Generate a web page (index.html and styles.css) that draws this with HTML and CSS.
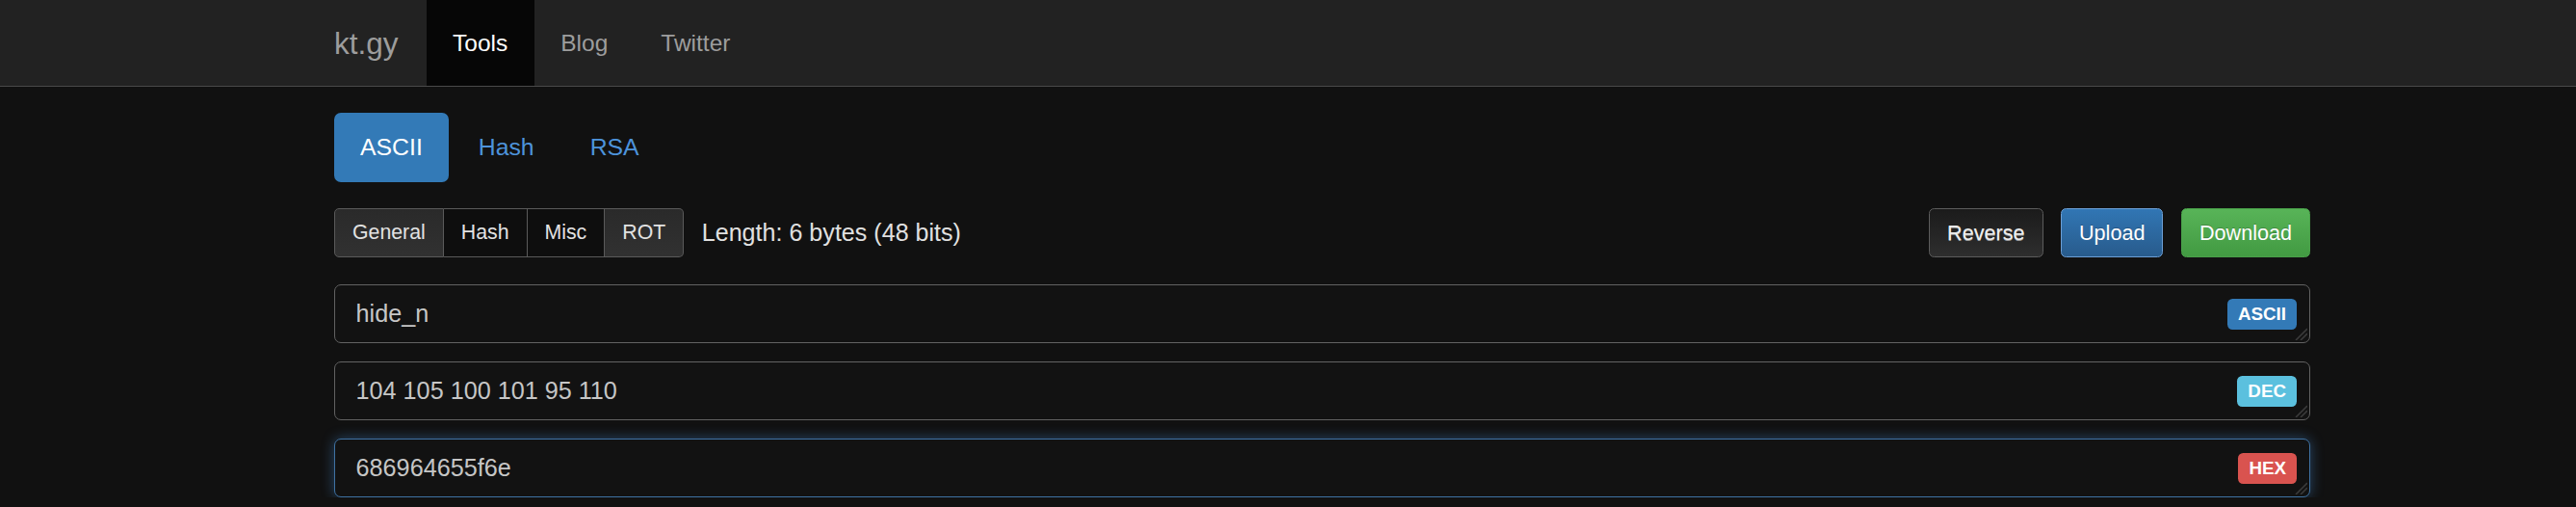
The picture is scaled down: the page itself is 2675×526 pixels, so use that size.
FILE: index.html
```html
<!DOCTYPE html>
<html>
<head>
<meta charset="utf-8">
<title>kt.gy Tools</title>
<link rel="stylesheet" href="styles.css">
</head>
<body>
<nav class="navbar">
  <div class="container nav-inner">
    <a class="brand">kt.gy</a>
    <a class="nav-link active">Tools</a>
    <a class="nav-link">Blog</a>
    <a class="nav-link">Twitter</a>
  </div>
</nav>
<main class="container">
  <div class="pills">
    <a class="pill active">ASCII</a>
    <a class="pill">Hash</a>
    <a class="pill">RSA</a>
  </div>
  <div class="toolbar">
    <div class="btn-group">
      <button class="gbtn light first">General</button>
      <button class="gbtn dark">Hash</button>
      <button class="gbtn dark">Misc</button>
      <button class="gbtn light last">ROT</button>
    </div>
    <span class="length">Length: 6 bytes (48 bits)</span>
    <div class="actions">
      <button class="btn btn-default">Reverse</button>
      <button class="btn btn-primary">Upload</button>
      <button class="btn btn-success">Download</button>
    </div>
  </div>
  <div class="fields">
    <div class="field">
      <textarea class="input" readonly>hide_n</textarea>
      <span class="label label-primary">ASCII</span>
      <svg class="grip" width="14" height="14" viewBox="0 0 14 14"><path d="M2 14 L14 2 M7 14 L14 7" stroke="#3a3a3a" stroke-width="1.6" fill="none"/></svg>
    </div>
    <div class="field">
      <textarea class="input" readonly>104 105 100 101 95 110</textarea>
      <span class="label label-info">DEC</span>
      <svg class="grip" width="14" height="14" viewBox="0 0 14 14"><path d="M2 14 L14 2 M7 14 L14 7" stroke="#3a3a3a" stroke-width="1.6" fill="none"/></svg>
    </div>
    <div class="field">
      <textarea class="input focus" readonly>686964655f6e</textarea>
      <span class="label label-danger">HEX</span>
      <svg class="grip" width="14" height="14" viewBox="0 0 14 14"><path d="M2 14 L14 2 M7 14 L14 7" stroke="#3a3a3a" stroke-width="1.6" fill="none"/></svg>
    </div>
  </div>
</main>
</body>
</html>
```
FILE: styles.css
```css
html, body {
  margin: 0;
  padding: 0;
  background: #111111;
  font-family: "Liberation Sans", Arial, sans-serif;
  color: #dddddd;
}
.container {
  width: 2052px;
  margin-left: 347px;
}
.navbar {
  background: #222222;
  height: 89px;
  border-bottom: 1px solid #4a4a4a;
}
.nav-inner {
  display: flex;
  height: 89px;
  align-items: stretch;
}
.brand {
  display: flex;
  align-items: center;
  font-size: 31.5px;
  line-height: 36px;
  color: #9d9d9d;
  padding-right: 29px;
}
.nav-link {
  display: flex;
  align-items: center;
  font-size: 24.5px;
  line-height: 36px;
  color: #9d9d9d;
  padding: 1px 27.5px 0;
}
.nav-link.active {
  background: #060606;
  color: #ffffff;
}
.pills {
  display: flex;
  gap: 4px;
  margin-top: 27px;
}
.pill {
  display: flex;
  align-items: center;
  height: 72px;
  padding: 0 27px;
  border-radius: 7px;
  font-size: 24.8px;
  color: #4d93db;
}
.pill.active {
  background: #337ab7;
  color: #ffffff;
}
.toolbar {
  display: flex;
  align-items: center;
  margin-top: 27px;
  height: 51px;
}
.btn-group {
  display: flex;
  height: 51px;
}
.gbtn {
  font-family: "Liberation Sans", Arial, sans-serif;
  font-size: 21.3px;
  color: #e2e2e2;
  padding: 0 18px;
  height: 51px;
  border: 1px solid #5a5a5a;
  border-left-width: 0;
  margin: 0;
}
.gbtn.first {
  border-left-width: 1px;
  border-radius: 5px 0 0 5px;
}
.gbtn.last {
  border-radius: 0 5px 5px 0;
}
.gbtn.light {
  background: linear-gradient(#2a2a2a, #313131);
}
.gbtn.dark {
  background: #0e0e0e;
}
.length {
  margin-left: 18.5px;
  font-size: 25.1px;
  color: #e0e0e0;
}
.actions {
  margin-left: auto;
  display: flex;
  gap: 18.5px;
}
.btn {
  font-family: "Liberation Sans", Arial, sans-serif;
  font-size: 21.6px;
  height: 51px;
  padding: 0 18px;
  border-radius: 5.4px;
  border: 1px solid;
  color: #ffffff;
  margin: 0;
}
.btn-default {
  background: linear-gradient(#1b1b1b, #2e2e2e);
  border-color: #5c5c5c;
  color: #eeeeee;
  text-shadow: 0 1px 0 rgba(255, 255, 255, 0.55);
}
.btn-primary {
  background: linear-gradient(#3176b4, #285b8c);
  border-color: #6c9fd6;
  text-shadow: 0 -1px 0 rgba(0, 0, 0, 0.2);
}
.btn-success {
  background: linear-gradient(#58b458, #429a42);
  border-color: #49a049;
  text-shadow: 0 -1px 0 rgba(0, 0, 0, 0.2);
}
.fields {
  margin-top: 28px;
  display: flex;
  flex-direction: column;
  gap: 19px;
}
.field {
  position: relative;
  height: 61px;
}
.input {
  display: block;
  box-sizing: border-box;
  width: 100%;
  height: 61px;
  margin: 0;
  padding: 11px 21.6px;
  font-family: "Liberation Sans", Arial, sans-serif;
  font-size: 25.2px;
  line-height: 36px;
  color: #c6c6c6;
  background: #121212;
  border: 1px solid #626262;
  border-radius: 7px;
  resize: none;
  outline: none;
  overflow: hidden;
}
.input.focus {
  border-color: #3f72a3;
  box-shadow: 0 0 14px rgba(70, 140, 210, 0.45);
}
.label {
  position: absolute;
  top: 15px;
  right: 14px;
  height: 32px;
  line-height: 32px;
  padding: 0 11px;
  border-radius: 5.4px;
  font-size: 18.8px;
  font-weight: bold;
  color: #ffffff;
}
.label-primary { background: #337ab7; }
.label-info { background: #5bc0de; }
.label-danger { background: #d9534f; }
.grip {
  position: absolute;
  right: 3px;
  bottom: 3px;
}
```
